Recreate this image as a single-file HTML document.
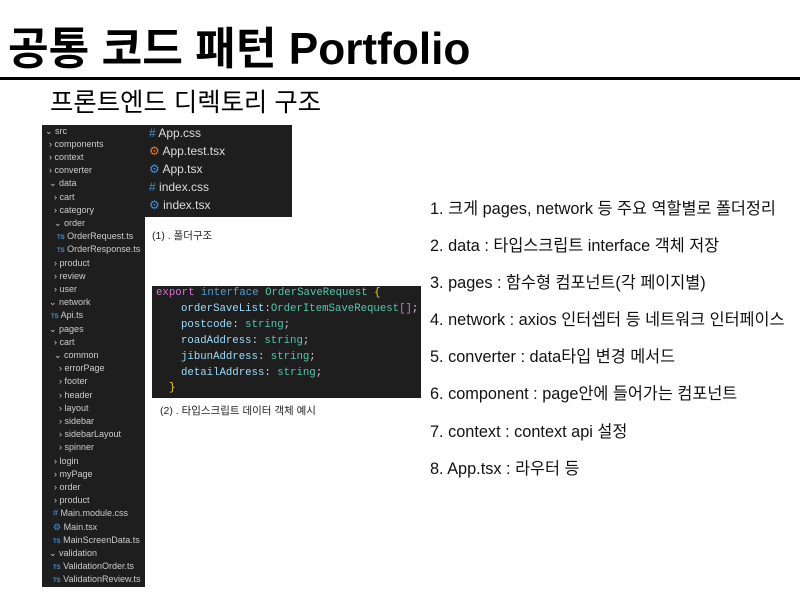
<!DOCTYPE html>
<html><head><meta charset="utf-8"><style>
body{margin:0;width:800px;height:600px;background:#fff;position:relative;overflow:hidden;font-family:"Liberation Sans","Noto Sans CJK KR",sans-serif}
.a{position:absolute;white-space:nowrap}
#tree{position:absolute;left:42px;top:125px;width:103px;height:462px;background:#1e1e1e}
#tree div{position:absolute;font-size:9px;color:#ccc;line-height:12px}
.ts{color:#4a8fd6;font-size:6px;font-weight:bold}
#app{position:absolute;left:145px;top:125px;width:147px;height:92px;background:#1e1e1e}
#app div{position:absolute;left:4px;font-size:12px;color:#ddd}
#code{position:absolute;left:152px;top:286px;width:269px;height:112px;background:#1e1e1e;font-family:"Liberation Mono","DejaVu Sans Mono",monospace;font-size:10.7px}
#code div{position:absolute;white-space:pre}
.k{color:#569cd6}.t{color:#4ec9b0}.p{color:#9cdcfe}.c{color:#d4d4d4}.y{color:#ffd700}.m{color:#da70d6}
.li{font-size:16.3px;color:#111;left:430px}
</style></head><body>
<div class="a" style="left:8px;top:13px;font-size:44.2px;font-weight:bold;color:#000">공통 코드 패턴 Portfolio</div>
<div class="a" style="left:0;top:77px;width:800px;height:3px;background:#000"></div>
<div class="a" style="left:50px;top:83px;font-size:25.4px;color:#000">프론트엔드 디렉토리 구조</div>
<div id="tree">
<div style="left:3px;top:0">⌄ src</div>
<div style="left:7px;top:13px">› components</div>
<div style="left:7px;top:26px">› context</div>
<div style="left:7px;top:39px">› converter</div>
<div style="left:7px;top:52px">⌄ data</div>
<div style="left:12px;top:66px">› cart</div>
<div style="left:12px;top:79px">› category</div>
<div style="left:12px;top:92px">⌄ order</div>
<div style="left:15px;top:105px"><span class="ts">TS</span> OrderRequest.ts</div>
<div style="left:15px;top:118px"><span class="ts">TS</span> OrderResponse.ts</div>
<div style="left:12px;top:132px">› product</div>
<div style="left:12px;top:145px">› review</div>
<div style="left:12px;top:158px">› user</div>
<div style="left:7px;top:171px">⌄ network</div>
<div style="left:9px;top:184px"><span class="ts">TS</span> Api.ts</div>
<div style="left:7px;top:198px">⌄ pages</div>
<div style="left:12px;top:211px">› cart</div>
<div style="left:12px;top:224px">⌄ common</div>
<div style="left:17px;top:237px">› errorPage</div>
<div style="left:17px;top:250px">› footer</div>
<div style="left:17px;top:264px">› header</div>
<div style="left:17px;top:277px">› layout</div>
<div style="left:17px;top:290px">› sidebar</div>
<div style="left:17px;top:303px">› sidebarLayout</div>
<div style="left:17px;top:316px">› spinner</div>
<div style="left:12px;top:330px">› login</div>
<div style="left:12px;top:343px">› myPage</div>
<div style="left:12px;top:356px">› order</div>
<div style="left:12px;top:369px">› product</div>
<div style="left:11px;top:382px"><span style="color:#4a8fd6">#</span> Main.module.css</div>
<div style="left:11px;top:396px"><span style="color:#4a8fd6">⚙</span> Main.tsx</div>
<div style="left:11px;top:409px"><span class="ts">TS</span> MainScreenData.ts</div>
<div style="left:7px;top:422px">⌄ validation</div>
<div style="left:11px;top:435px"><span class="ts">TS</span> ValidationOrder.ts</div>
<div style="left:11px;top:448px"><span class="ts">TS</span> ValidationReview.ts</div>
</div>
<div id="app">
<div style="top:1px"><span style="color:#4a8fd6">#</span> App.css</div>
<div style="top:19px"><span style="color:#e37933">⚙</span> App.test.tsx</div>
<div style="top:37px"><span style="color:#4a8fd6">⚙</span> App.tsx</div>
<div style="top:55px"><span style="color:#4a8fd6">#</span> index.css</div>
<div style="top:73px"><span style="color:#4a8fd6">⚙</span> index.tsx</div>
</div>
<div class="a" style="left:152px;top:228px;font-size:10.5px;color:#222">(1) . 폴더구조</div>
<div id="code">
<div style="left:4px;top:1px"><span class="m">export</span> <span class="k">interface</span> <span class="t">OrderSaveRequest</span> <span class="y">{</span></div>
<div style="left:29px;top:17px"><span class="p">orderSaveList</span><span class="c">:</span><span class="t">OrderItemSaveRequest</span><span class="m">[]</span><span class="c">;</span></div>
<div style="left:29px;top:33px"><span class="p">postcode</span><span class="c">: </span><span class="t">string</span><span class="c">;</span></div>
<div style="left:29px;top:49px"><span class="p">roadAddress</span><span class="c">: </span><span class="t">string</span><span class="c">;</span></div>
<div style="left:29px;top:65px"><span class="p">jibunAddress</span><span class="c">: </span><span class="t">string</span><span class="c">;</span></div>
<div style="left:29px;top:81px"><span class="p">detailAddress</span><span class="c">: </span><span class="t">string</span><span class="c">;</span></div>
<div style="left:17px;top:96px"><span class="y">}</span></div>
</div>
<div class="a" style="left:160px;top:403px;font-size:10.5px;color:#222">(2) . 타입스크립트 데이터 객체 예시</div>
<div class="a li" style="top:195px">1. 크게 pages, network 등 주요 역할별로 폴더정리</div>
<div class="a li" style="top:232px">2. data : 타입스크립트 interface 객체 저장</div>
<div class="a li" style="top:269px">3. pages : 함수형 컴포넌트(각 페이지별)</div>
<div class="a li" style="top:306px">4. network : axios 인터셉터 등 네트워크 인터페이스</div>
<div class="a li" style="top:343px">5. converter : data타입 변경 메서드</div>
<div class="a li" style="top:380px">6. component : page안에 들어가는 컴포넌트</div>
<div class="a li" style="top:418px">7. context : context api 설정</div>
<div class="a li" style="top:455px">8. App.tsx : 라우터 등</div>
</body></html>
